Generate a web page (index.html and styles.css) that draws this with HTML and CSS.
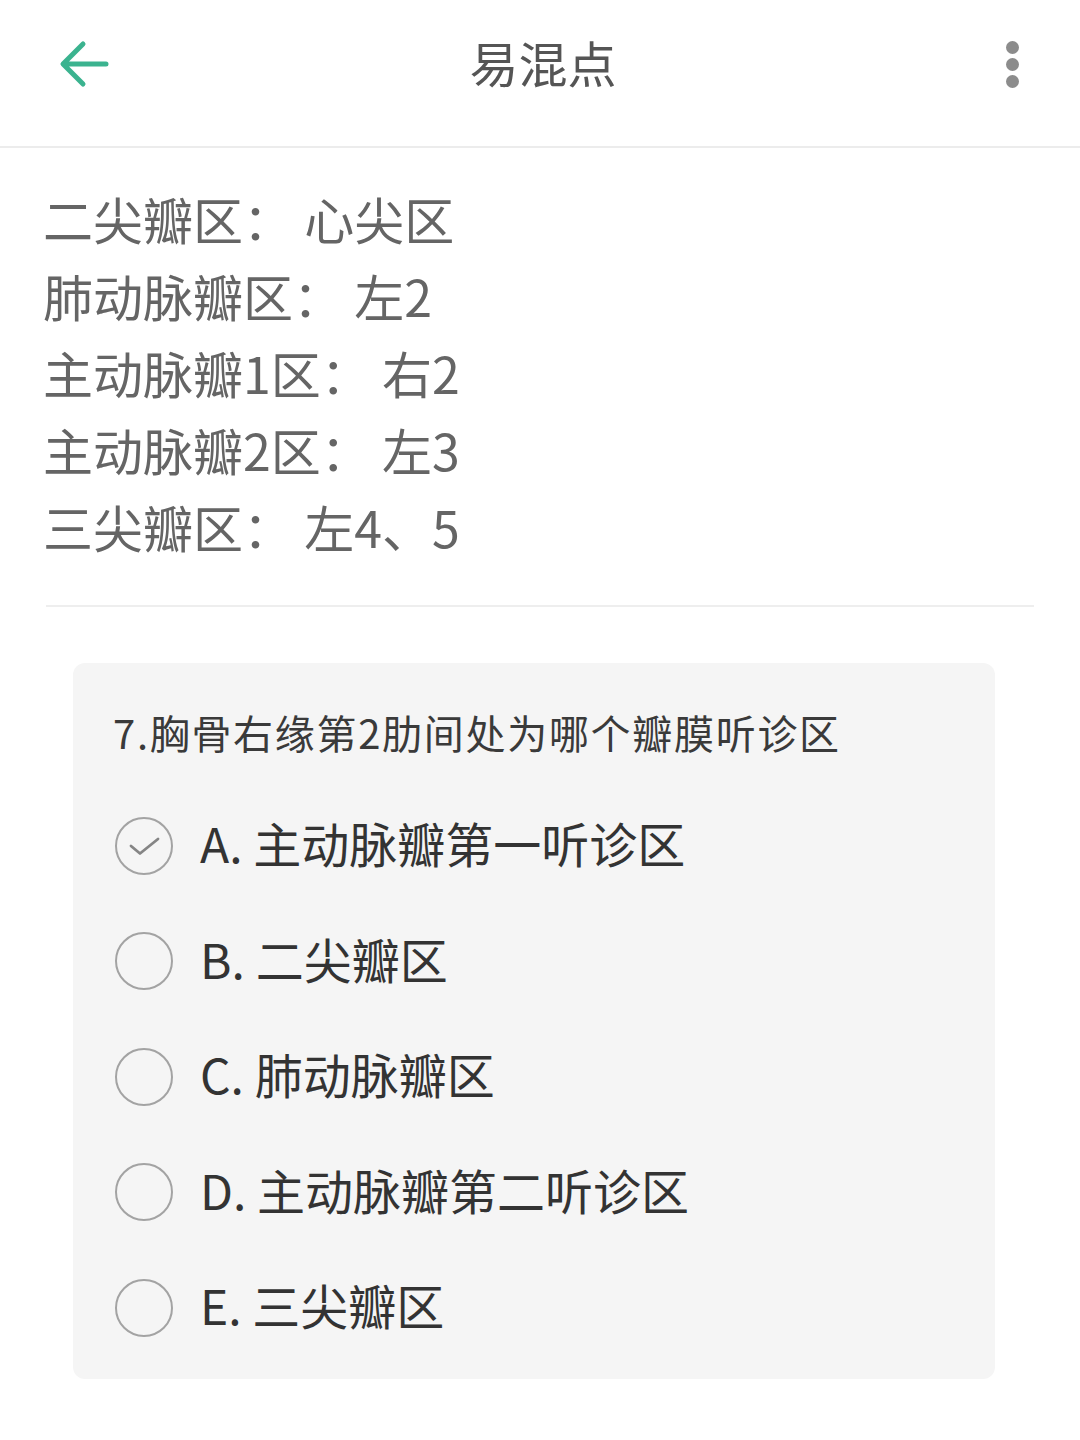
FILE: index.html
```html
<!DOCTYPE html>
<html lang="zh-CN">
<head>
<meta charset="utf-8">
<title>易混点</title>
<link rel="stylesheet" href="styles.css">
</head>
<body>
<header class="topbar">
  <div class="side left">
    <svg class="back" width="52" height="52" viewBox="0 0 52 52">
      <path d="M48 24H6M25 4L5 24L25 44" fill="none" stroke="#3bb38f" stroke-width="5" stroke-linecap="round" stroke-linejoin="round"/>
    </svg>
  </div>
  <h1 class="title">易混点</h1>
  <div class="side right">
    <div class="more"><span></span><span></span><span></span></div>
  </div>
</header>
<main class="content">
  <div class="notes">
    <p>二尖瓣区： 心尖区</p>
    <p>肺动脉瓣区： 左2</p>
    <p>主动脉瓣1区： 右2</p>
    <p>主动脉瓣2区： 左3</p>
    <p>三尖瓣区： 左4、5</p>
  </div>
  <hr class="divider">
  <section class="card">
    <div class="question">7.胸骨右缘第2肋间处为哪个瓣膜听诊区</div>
    <ul class="options">
      <li class="option"><span class="radio checked"><svg width="34" height="34" viewBox="0 0 34 34"><path d="M4 17L13 24.5L31 10" fill="none" stroke="#858585" stroke-width="2.8" stroke-linecap="round" stroke-linejoin="round"/></svg></span><span class="label">A. 主动脉瓣第一听诊区</span></li>
      <li class="option"><span class="radio"></span><span class="label">B. 二尖瓣区</span></li>
      <li class="option"><span class="radio"></span><span class="label">C. 肺动脉瓣区</span></li>
      <li class="option"><span class="radio"></span><span class="label">D. 主动脉瓣第二听诊区</span></li>
      <li class="option"><span class="radio"></span><span class="label">E. 三尖瓣区</span></li>
    </ul>
  </section>
</main>
</body>
</html>
```
FILE: styles.css
```css
* { box-sizing: border-box; }
html, body { margin: 0; padding: 0; background: #fff; }
body {
  width: 1080px;
  font-family: "Noto Sans CJK SC", "Noto Sans", sans-serif;
}
.topbar {
  height: 148px;
  border-bottom: 2px solid #ececec;
  display: grid;
  grid-template-columns: 1fr auto 1fr;
  align-items: center;
  padding: 0 52px 18px 58px;
}
.side { display: flex; align-items: center; }
.side.right { justify-content: flex-end; }
.back { display: block; margin-top: 4px; }
.title {
  margin: 0;
  font-size: 49px;
  font-weight: 400;
  color: #555;
  line-height: 1;
  margin-top: -6px;
}
.more {
  display: flex;
  flex-direction: column;
  align-items: center;
  gap: 4px;
  width: 32px;
}
.more span {
  width: 13px;
  height: 13px;
  border-radius: 50%;
  background: #8c8c8c;
}
.content { padding: 32px 46px 0 46px; }
.notes p {
  margin: 0;
  font-size: 50px;
  line-height: 77px;
  color: #656565;
  margin-left: -3px;
}
.divider {
  border: 0;
  border-top: 2px solid #eeeeee;
  margin: 40px 0 0 0;
}
.card {
  margin: 56px 39px 0 27px;
  background: #f5f5f5;
  border-radius: 12px;
  padding: 44px 30px 13px 42px;
}
.question {
  font-size: 40px;
  letter-spacing: 1.7px;
  line-height: 50px;
  color: #3a3a3a;
  margin-left: -2px;
}
.options {
  list-style: none;
  margin: 31px 0 0 0;
  padding: 0;
}
.option {
  height: 115.5px;
  display: flex;
  align-items: center;
}
.radio {
  width: 58px;
  height: 58px;
  border: 2px solid #a3a3a3;
  border-radius: 50%;
  flex: none;
  display: flex;
  align-items: center;
  justify-content: center;
}
.label {
  margin-left: 27px;
  font-size: 48px;
  color: #333;
  line-height: 1;
  padding-bottom: 7px;
}
```
